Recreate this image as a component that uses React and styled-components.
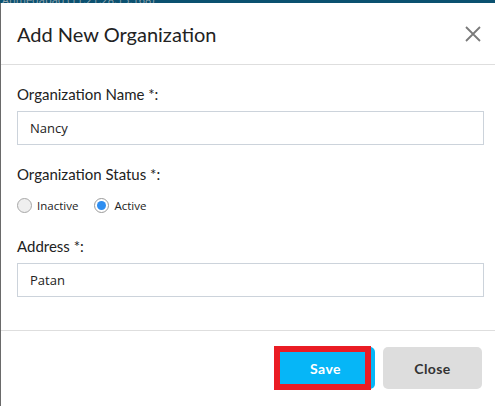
import React from "react";
import styled, { createGlobalStyle } from "styled-components";

const Global = createGlobalStyle`
  html, body { margin: 0; padding: 0; }
  body {
    background: #6a6a6a;
    font-family: Lato, "Open Sans", sans-serif;
    width: 495px;
    height: 406px;
    overflow: hidden;
  }
`;

const Page = styled.div`
  display: flex;
  flex-direction: column;
  width: 495px;
  height: 406px;
`;

const TopStrip = styled.div`
  height: 3px;
  background: #0b5170;
  overflow: hidden;
  display: flex;
  align-items: flex-end;
  padding-left: 2px;
  font-family: "Open Sans", sans-serif;
  font-size: 11px;
  line-height: 8px;
  color: #8fa3ad;
  white-space: nowrap;
`;

const StripText = styled.span`
  display: block;
  height: 3px;
  line-height: 0px;
`;

const Modal = styled.div`
  margin-left: 1px;
  flex: 1;
  background: #fff;
  display: flex;
  flex-direction: column;
`;

const Header = styled.div`
  height: 61px;
  border-bottom: 1px solid #dedede;
  display: flex;
  align-items: center;
  justify-content: space-between;
  padding: 0 13px 0 16px;
`;

const Title = styled.h2`
  margin: 0;
  font-family: Lato, sans-serif;
  font-weight: 400;
  font-size: 20px;
  color: #222;
`;

const CloseIcon = styled.button`
  border: none;
  background: none;
  padding: 0;
  width: 18px;
  height: 18px;
  display: flex;
  align-items: center;
  justify-content: center;
  cursor: pointer;
`;

const Body = styled.div`
  padding: 19px 11px 33px 16px;
  display: flex;
  flex-direction: column;
  gap: 19px;
`;

const Field = styled.div`
  display: flex;
  flex-direction: column;
  gap: ${(p) => p.$gap || 6}px;
`;

const Label = styled.label`
  font-family: Lato, sans-serif;
  font-size: 15px;
  line-height: 21px;
  color: #222;
`;

const Input = styled.input`
  box-sizing: border-box;
  height: 34px;
  width: 100%;
  border: 1px solid #ccd3db;
  padding: 0 12px;
  font-family: "Open Sans", sans-serif;
  font-size: 13px;
  color: #222;
  outline: none;
`;

const RadioRow = styled.div`
  display: flex;
  align-items: center;
  gap: 16px;
  height: 24px;
`;

const RadioOption = styled.label`
  display: flex;
  align-items: center;
  gap: 5px;
  font-family: "Open Sans", sans-serif;
  font-size: 11.5px;
  color: #222;
`;

const RadioCircle = styled.span`
  box-sizing: border-box;
  width: 15px;
  height: 15px;
  border-radius: 50%;
  border: 1px solid ${(p) => (p.$checked ? "#9a9a9a" : "#a8a8a8")};
  background: ${(p) => (p.$checked ? "#fff" : "#efefef")};
  display: flex;
  align-items: center;
  justify-content: center;
  &::after {
    content: "";
    display: ${(p) => (p.$checked ? "block" : "none")};
    width: 9px;
    height: 9px;
    border-radius: 50%;
    background: #2f8ef0;
  }
`;

const Footer = styled.div`
  border-top: 1px solid #dedede;
  padding: 16px 13px 16px 0;
  display: flex;
  justify-content: flex-end;
  gap: 8px;
`;

const Button = styled.button`
  width: 99px;
  height: 42px;
  border: none;
  border-radius: 5px;
  font-family: Lato, sans-serif;
  font-weight: 700;
  font-size: 14px;
  letter-spacing: 0.4px;
  background: ${(p) => (p.$primary ? "#06b6f7" : "#dddddd")};
  color: ${(p) => (p.$primary ? "#fff" : "#333")};
  cursor: pointer;
`;

const Highlight = styled.div`
  position: relative;
  display: flex;
`;

const RedBox = styled.div`
  position: absolute;
  left: -2px;
  top: -1px;
  width: 97px;
  height: 44px;
  box-sizing: border-box;
  border: 6px solid #ea1c24;
  pointer-events: none;
`;

export default function App() {
  return (
    <>
      <Global />
      <Page>
        <TopStrip>
          <StripText>Ahmedabad (11:21:28:13.168)</StripText>
        </TopStrip>
        <Modal>
          <Header>
            <Title>Add New Organization</Title>
            <CloseIcon aria-label="close">
              <svg width="16" height="16" viewBox="0 0 16 16">
                <path d="M1 1 L15 15 M15 1 L1 15" stroke="#7a7a7a" strokeWidth="1.8" fill="none" />
              </svg>
            </CloseIcon>
          </Header>
          <Body>
            <Field>
              <Label>Organization Name *:</Label>
              <Input defaultValue="Nancy" />
            </Field>
            <Field $gap={8}>
              <Label>Organization Status *:</Label>
              <RadioRow>
                <RadioOption>
                  <RadioCircle />
                  Inactive
                </RadioOption>
                <RadioOption>
                  <RadioCircle $checked />
                  Active
                </RadioOption>
              </RadioRow>
            </Field>
            <Field>
              <Label>Address *:</Label>
              <Input defaultValue="Patan" />
            </Field>
          </Body>
          <Footer>
            <Highlight>
              <Button $primary>Save</Button>
              <RedBox />
            </Highlight>
            <Button>Close</Button>
          </Footer>
        </Modal>
      </Page>
    </>
  );
}
